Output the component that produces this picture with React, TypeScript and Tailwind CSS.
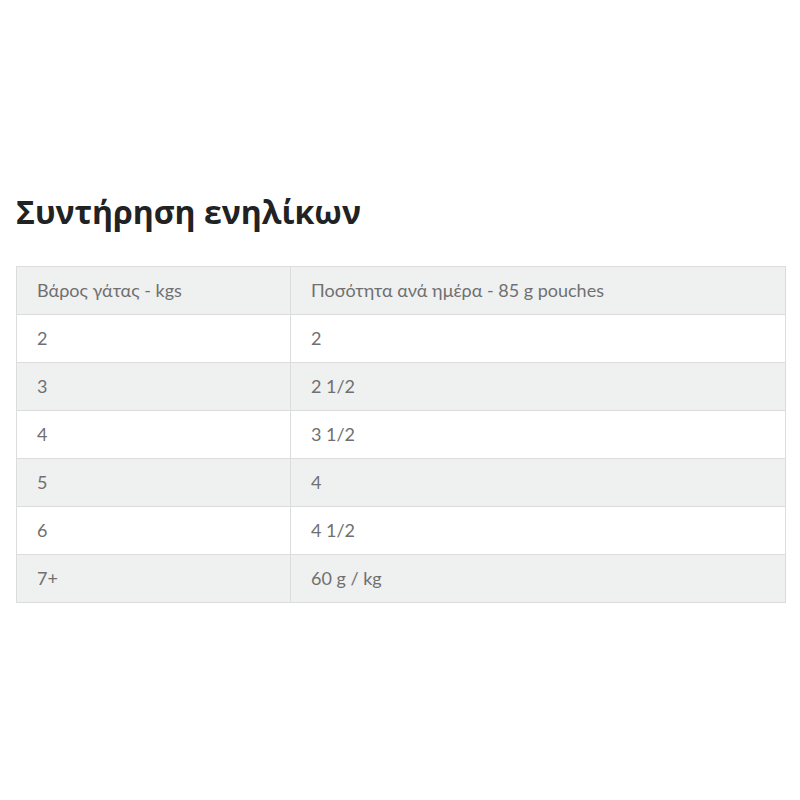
import React from "react";

const rows: [string, string][] = [
  ["2", "2"],
  ["3", "2 1/2"],
  ["4", "3 1/2"],
  ["5", "4"],
  ["6", "4 1/2"],
  ["7+", "60 g / kg"],
];

export default function App() {
  return (
    <div className="w-[800px] h-[800px] bg-white px-4 pt-[186px]">
      <h2 className="text-[32px] leading-[52px] font-bold text-[#222] [font-family:'Open_Sans',sans-serif]">
        Συντήρηση ενηλίκων
      </h2>
      <table className="mt-[28px] w-[770px] border-collapse border border-[#dcdcdc] text-[18px] text-[#707070] [font-family:Lato,sans-serif]">
        <tbody>
          <tr className="bg-[#eff0f0] h-[48px]">
            <td className="w-[274px] border border-[#dcdcdc] px-5 align-middle">Βάρος γάτας - kgs</td>
            <td className="border border-[#dcdcdc] px-5 align-middle">Ποσότητα ανά ημέρα - 85 g pouches</td>
          </tr>
          {rows.map(([a, b], i) => (
            <tr key={i} className={(i % 2 === 1 ? "bg-[#eff0f0]" : "bg-white") + " h-[48px]"}>
              <td className="border border-[#dcdcdc] px-5 align-middle">{a}</td>
              <td className="border border-[#dcdcdc] px-5 align-middle">{b}</td>
            </tr>
          ))}
        </tbody>
      </table>
    </div>
  );
}
